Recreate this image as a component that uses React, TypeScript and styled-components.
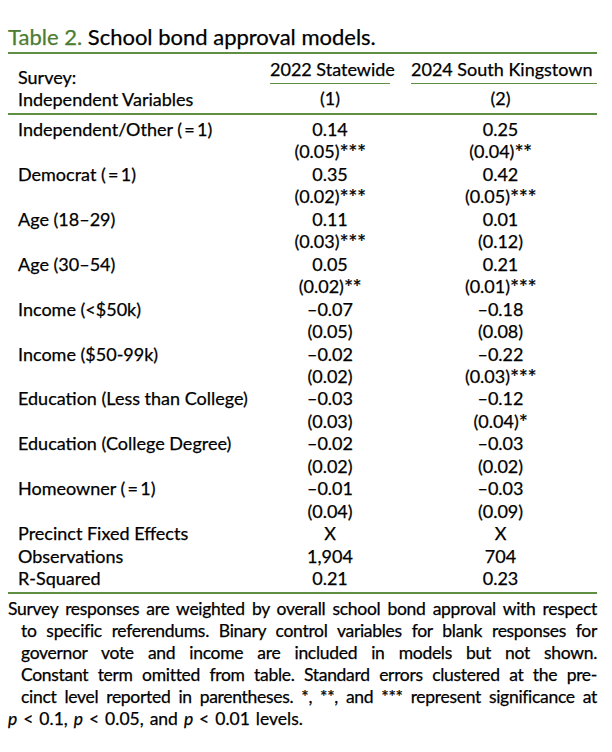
import React from "react";
import styled, { createGlobalStyle } from "styled-components";

const GREEN = "#5e8f43";
const FONT = `Lato, "Liberation Sans", sans-serif`;

const GlobalStyle = createGlobalStyle`
  html, body {
    margin: 0;
    padding: 0;
    background: #ffffff;
  }
  body {
    font-family: ${FONT};
    color: #000000;
    -webkit-text-stroke: 0.25px currentColor;
  }
`;

const Page = styled.div`
  width: 589px;
  padding: 24px 0 0 8px;
`;

const Caption = styled.div`
  font-size: 22px;
  line-height: 26px;
  padding-bottom: 2px;
`;

const CaptionLabel = styled.span`
  color: #4c7d32;
`;

const Table = styled.div`
  border-top: 2px solid ${GREEN};
  border-bottom: 2px solid ${GREEN};
  font-size: 18px;
`;

const Head = styled.div`
  display: grid;
  grid-template-columns: 262px 120px 21px 186px;
  border-bottom: 2px solid ${GREEN};
  padding-bottom: 3px;
`;

const HeadLabels = styled.div`
  padding: 12px 0 0 10px;
  line-height: 22px;
`;

const ColHead = styled.div`
  display: flex;
  flex-direction: column;
  padding-top: 4px;
  text-align: center;
`;

const ColTitle = styled.div<{ $right?: number }>`
  line-height: 22.5px;
  padding: 0 ${(p) => p.$right || 0}px 2px 0;
  border-bottom: 1.5px solid ${GREEN};
  white-space: nowrap;
`;

const ColNum = styled.div<{ $right?: number }>`
  line-height: 18px;
  padding: 5px ${(p) => p.$right || 0}px 0 0;
`;

const Body = styled.div`
  display: grid;
  grid-template-columns: 262px 120px 21px 186px;
  line-height: 22.45px;
  padding: 3px 0 2px;
`;

const RowLabel = styled.div`
  padding-left: 10px;
  white-space: nowrap;
`;

const Cell = styled.div<{ $right?: number }>`
  text-align: center;
  white-space: nowrap;
  padding-right: ${(p) => p.$right || 0}px;
`;

const Stars = styled.span`
  font-size: 1.2em;
  line-height: 0;
  letter-spacing: -0.5px;
  position: relative;
  top: 2px;
`;

const Note = styled.div`
  margin-top: 4px;
  font-size: 17.5px;
  letter-spacing: -0.3px;
  line-height: 22px;
`;

const NoteLine = styled.div<{ $indent?: boolean; $last?: boolean }>`
  white-space: nowrap;
  padding-left: ${(p) => (p.$indent ? 13 : 0)}px;
  text-align: ${(p) => (p.$last ? "left" : "justify")};
  text-align-last: ${(p) => (p.$last ? "left" : "justify")};
  letter-spacing: ${(p) => (p.$last ? "0px" : "inherit")};
  word-spacing: ${(p) => (p.$last ? "1.5px" : "normal")};
`;

type Row = {
  label: string;
  a: string;
  b: string;
  seA?: string;
  seB?: string;
};

const EQ = "(\u2009=\u20091)";

const rows: Row[] = [
  { label: `Independent/Other ${EQ}`, a: "0.14", seA: "(0.05)***", b: "0.25", seB: "(0.04)**" },
  { label: `Democrat ${EQ}`, a: "0.35", seA: "(0.02)***", b: "0.42", seB: "(0.05)***" },
  { label: "Age (18\u201329)", a: "0.11", seA: "(0.03)***", b: "0.01", seB: "(0.12)" },
  { label: "Age (30\u201354)", a: "0.05", seA: "(0.02)**", b: "0.21", seB: "(0.01)***" },
  { label: "Income (<$50k)", a: "\u20130.07", seA: "(0.05)", b: "\u20130.18", seB: "(0.08)" },
  { label: "Income ($50-99k)", a: "\u20130.02", seA: "(0.02)", b: "\u20130.22", seB: "(0.03)***" },
  { label: "Education (Less than College)", a: "\u20130.03", seA: "(0.03)", b: "\u20130.12", seB: "(0.04)*" },
  { label: "Education (College Degree)", a: "\u20130.02", seA: "(0.02)", b: "\u20130.03", seB: "(0.02)" },
  { label: `Homeowner ${EQ}`, a: "\u20130.01", seA: "(0.04)", b: "\u20130.03", seB: "(0.09)" },
  { label: "Precinct Fixed Effects", a: "X", b: "X" },
  { label: "Observations", a: "1,904", b: "704" },
  { label: "R-Squared", a: "0.21", b: "0.23" },
];

const noteLines = [
  "Survey responses are weighted by overall school bond approval with respect",
  "to specific referendums. Binary control variables for blank responses for",
  "governor vote and income are included in models but not shown.",
  "Constant term omitted from table. Standard errors clustered at the pre-",
  "cinct level reported in parentheses. *, **, and *** represent significance at",
];

const COL2_PAD = 7;

// splits "(0.05)***" into the value and its significance stars
function SE({ text }: { text?: string }) {
  if (!text) return null;
  const m = text.match(/^(.*?)(\**)$/);
  const base = m ? m[1] : text;
  const stars = m ? m[2] : "";
  return (
    <>
      {base}
      {stars && <Stars>{stars}</Stars>}
    </>
  );
}

export default function App() {
  return (
    <>
      <GlobalStyle />
      <Page>
        <Caption>
          <CaptionLabel>Table 2.</CaptionLabel> School bond approval models.
        </Caption>
        <Table>
          <Head>
            <HeadLabels>
              <div>Survey:</div>
              <div>Independent Variables</div>
            </HeadLabels>
            <ColHead>
              <ColTitle>2022 Statewide</ColTitle>
              <ColNum>(1)</ColNum>
            </ColHead>
            <div />
            <ColHead>
              <ColTitle $right={COL2_PAD}>2024 South Kingstown</ColTitle>
              <ColNum $right={COL2_PAD}>(2)</ColNum>
            </ColHead>
          </Head>
          <Body>
            {rows.map((r) => (
              <React.Fragment key={r.label}>
                <RowLabel>{r.label}</RowLabel>
                <Cell>{r.a}</Cell>
                <div />
                <Cell $right={COL2_PAD}>{r.b}</Cell>
                {r.seA && (
                  <>
                    <div />
                    <Cell>
                      <SE text={r.seA} />
                    </Cell>
                    <div />
                    <Cell $right={COL2_PAD}>
                      <SE text={r.seB} />
                    </Cell>
                  </>
                )}
              </React.Fragment>
            ))}
          </Body>
        </Table>
        <Note>
          {noteLines.map((line, i) => (
            <NoteLine key={i} $indent={i > 0}>
              {line}
            </NoteLine>
          ))}
          <NoteLine $last>
            <i>p</i> &lt; 0.1, <i>p</i> &lt; 0.05, and <i>p</i> &lt; 0.01 levels.
          </NoteLine>
        </Note>
      </Page>
    </>
  );
}
